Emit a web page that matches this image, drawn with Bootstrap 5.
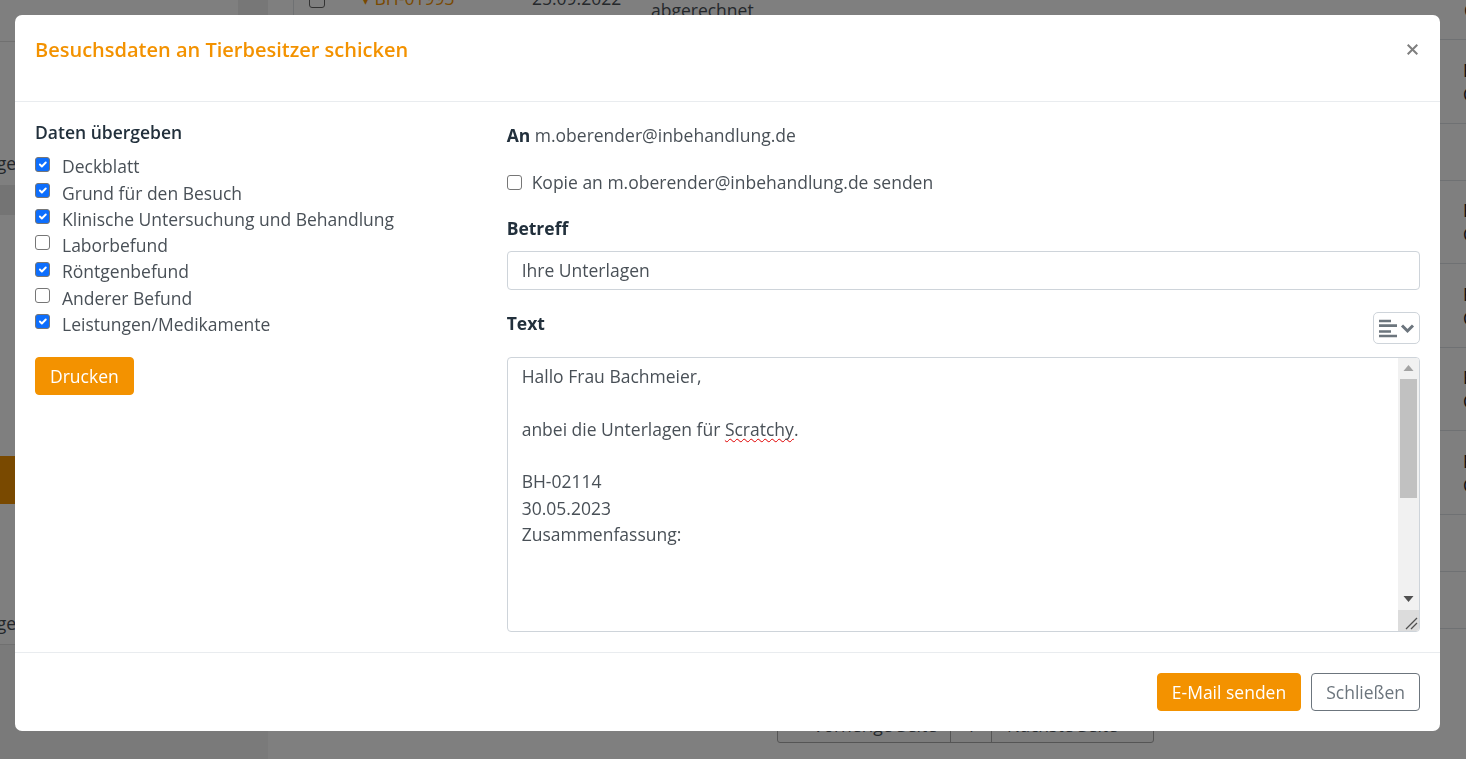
<!doctype html>
<html lang="de">
<head>
<meta charset="utf-8">
<title>Besuchsdaten</title>
<link href="https://cdn.jsdelivr.net/npm/bootstrap@5.3.0/dist/css/bootstrap.min.css" rel="stylesheet">
<style>
html,body{height:100%;overflow:hidden}
body{font-family:"Open Sans",sans-serif;font-size:17.5px;line-height:1.5;color:#495057;background:#fff}
/* page behind the dialog */
.app-bg{height:759px;overflow:hidden}
.side-col{width:268px;background:#f4f4f4;flex:none}
.side-top{height:42px;background:#fff;border-bottom:1px solid #e0e0e0}
.side-top span{display:block;height:100%;margin-left:238px;width:30px;background:#eee}
.side-txt{height:143px;padding:108px 252px 0 0;line-height:26px;background:#fff;white-space:nowrap;overflow:hidden;justify-content:flex-end}
.side-band{height:30px;background:#e9e9e9}
.side-space{height:241px;background:#fff}
.side-active{height:48px;background:#f39200}
.side-low{height:141px;background:#fff;padding:106px 252px 0 0;line-height:26px;white-space:nowrap;overflow:hidden;justify-content:flex-end;border-bottom:1px solid #e0e0e0}
.main-col{flex:1;min-width:0;background:#fff;padding-left:25px}
.tbl-row{border-bottom:1px solid #dee2e6;border-left:1px solid #dee2e6;width:1400px;padding-left:15px;align-items:center}
.tbl-first{height:40px;align-items:flex-end;overflow:hidden}
.cell-check{width:16px;height:16px;border:1px solid #666;border-radius:3px;margin-bottom:31px;margin-right:36px}
.cell-id{width:171px;color:#f39200;line-height:26px;margin-bottom:28px}
.cell-date{width:119px;line-height:26px;margin-bottom:28px}
.cell-state{width:813px;line-height:26px;margin-bottom:16px}
.cell-end{line-height:26px;margin-bottom:16px;color:#212529}
.cell-far{margin-left:1154px;color:#212529;line-height:24px}
.h57{height:57px}.h84{height:84px}.h83{height:83px}
.pager{margin:74px 0 0 484px;width:377px;height:40px;border:1px solid #aaa;border-radius:3px;background:#f8f8f8}
.pager span{text-align:center;line-height:38px;padding-top:2px;border-right:1px solid #aaa}
.pager .pfirst{width:173px;padding-left:22px}
.pager .pnum{width:41px}
.pager .plast{flex:1;border-right:0;padding-right:20px}

.modal-backdrop{opacity:.5}
.dlg{max-width:1425px;margin:15px 0 0 15px;width:1425px}
.dlg .modal-content{border:0;border-radius:7px;height:716px}
.dlg .modal-header{height:87px;padding:20px;align-items:flex-start;border-bottom:1px solid #e9ecef}
.dlg .modal-title{color:#f39200;font-size:20px;font-weight:600;line-height:30px}
.x-btn{border:0;background:none;padding:0;line-height:0;margin:9px 2px 0 0}
.dlg .modal-body{padding:20px;height:550px;flex:none}
.dlg .modal-footer{padding:20px;border-top:1px solid #e9ecef;height:79px;gap:10px}
.dlg .modal-footer>*{margin:0}
.wide-row{--bs-gutter-x:30px}
.sec-title{color:#22303c;font-weight:700;font-size:17.5px;line-height:26px;margin:0 0 10px}
.left-title{font-weight:600;margin-bottom:8.3px;margin-top:-3px}
.chk{min-height:26.25px;margin:0;padding-left:27px;line-height:26.25px}
.chk .form-check-input{width:15px;height:15px;margin-top:3.4px;margin-left:-27px;border-color:#767676;border-radius:3px}
.chk .form-check-label{color:#495057}
.chk-copy{padding-left:25px;margin-bottom:20px}
.chk-copy .form-check-input{margin-left:-25px;margin-top:6px}
.to-line{line-height:26px;margin:0 0 21px}
.to-line b{color:#22303c;font-weight:700}
.btn-orange{--bs-btn-bg:#f39200;--bs-btn-border-color:#f39200;--bs-btn-color:#fff;--bs-btn-hover-bg:#f39200;--bs-btn-hover-border-color:#f39200;--bs-btn-hover-color:#fff;font-size:17.5px;line-height:26px;padding:5px 14px;border-radius:4px}
.btn-line{--bs-btn-bg:#fff;--bs-btn-border-color:#6c757d;--bs-btn-color:#6c757d;--bs-btn-hover-bg:#fff;--bs-btn-hover-color:#6c757d;--bs-btn-hover-border-color:#6c757d;font-size:17.5px;line-height:26px;padding:5px 14px;border-radius:4px}
.print-btn{margin-top:20px}
.field{height:39px;font-size:17.5px;line-height:26px;padding:4px 14px 6px;border-color:#ced4da;border-radius:4px;color:#495057;margin-bottom:19px}
.txt-head{height:41px}
.txt-head .sec-title{margin:1px 0 0}
.fmt-btn{width:47px;height:32px;padding:0;margin-top:3px;border:1px solid #ced4da;border-radius:5px;background:#fff;--bs-btn-hover-bg:#fff;--bs-btn-hover-border-color:#ced4da}
.fmt-btn svg{display:block;margin:auto}
.mail-box{height:275px;margin-top:7px;border:1px solid #ced4da;border-radius:4px;overflow:hidden}
.mail-text{padding:5px 14px;white-space:pre-line;line-height:26.25px;color:#495057;min-width:0}
.fake-bar{width:21px;background:#f1f1f1}
.bar-btn{height:21px}
.bar-thumb{height:119px;margin:0 2px;background:#c1c1c1}
.bar-corner{height:21px;background:#dcdcdc}
.fake-bar svg{display:block}
.typo{text-decoration:underline wavy #e00000 1px;text-underline-offset:2px;text-decoration-skip-ink:none}
</style>
</head>
<body>
<div class="app-bg d-flex">
  <aside class="side-col">
    <div class="side-top"><span></span></div>
    <div class="side-txt d-flex"><span>Anfrage</span></div>
    <div class="side-band"></div>
    <div class="side-space"></div>
    <div class="side-active"></div>
    <div class="side-low d-flex"><span>Auszuge</span></div>
  </aside>
  <main class="main-col">
    <div class="d-flex tbl-row tbl-first"><span class="cell-check"></span><span class="cell-id">▾ BH-01993</span><span class="cell-date">25.09.2022</span><span class="cell-state">abgerechnet</span><span class="cell-end">C</span></div>
    <div class="d-flex tbl-row h84"><span class="cell-far">B<br>C</span></div>
    <div class="d-flex tbl-row h57"></div>
    <div class="d-flex tbl-row h83"><span class="cell-far">B<br>C</span></div>
    <div class="d-flex tbl-row h84"><span class="cell-far">B<br>C</span></div>
    <div class="d-flex tbl-row h83"><span class="cell-far">B<br>C</span></div>
    <div class="d-flex tbl-row h84"><span class="cell-far">B<br>C</span></div>
    <div class="d-flex tbl-row h57"></div>
    <div class="d-flex tbl-row h57"></div>
    <div class="pager d-flex"><span class="pfirst">Vorherige Seite</span><span class="pnum">1</span><span class="plast">Nächste Seite</span></div>
  </main>
</div>

<div class="modal-backdrop show"></div>
<div class="modal d-block" tabindex="-1" style="overflow:hidden">
  <div class="modal-dialog dlg">
    <div class="modal-content">
      <div class="modal-header">
        <h5 class="modal-title">Besuchsdaten an Tierbesitzer schicken</h5>
        <button type="button" class="x-btn ms-auto" aria-label="Schließen">
          <svg width="11" height="11" viewBox="0 0 11 11" fill="none" stroke="#7f7f7f" stroke-width="2"><path d="M.7.7l9.6 9.6M10.3.7L.7 10.3"/></svg>
        </button>
      </div>
      <div class="modal-body">
        <div class="row wide-row">
          <div class="col-4">
            <p class="sec-title left-title">Daten übergeben</p>
            <div class="form-check chk"><input class="form-check-input" type="checkbox" id="c1" checked><label class="form-check-label" for="c1">Deckblatt</label></div>
            <div class="form-check chk"><input class="form-check-input" type="checkbox" id="c2" checked><label class="form-check-label" for="c2">Grund für den Besuch</label></div>
            <div class="form-check chk"><input class="form-check-input" type="checkbox" id="c3" checked><label class="form-check-label" for="c3">Klinische Untersuchung und Behandlung</label></div>
            <div class="form-check chk"><input class="form-check-input" type="checkbox" id="c4"><label class="form-check-label" for="c4">Laborbefund</label></div>
            <div class="form-check chk"><input class="form-check-input" type="checkbox" id="c5" checked><label class="form-check-label" for="c5">Röntgenbefund</label></div>
            <div class="form-check chk"><input class="form-check-input" type="checkbox" id="c6"><label class="form-check-label" for="c6">Anderer Befund</label></div>
            <div class="form-check chk"><input class="form-check-input" type="checkbox" id="c7" checked><label class="form-check-label" for="c7">Leistungen/Medikamente</label></div>
            <button type="button" class="btn btn-orange print-btn">Drucken</button>
          </div>
          <div class="col-8">
            <p class="to-line"><b>An</b> m.oberender@inbehandlung.de</p>
            <div class="form-check chk chk-copy"><input class="form-check-input" type="checkbox" id="c8"><label class="form-check-label" for="c8">Kopie an m.oberender@inbehandlung.de senden</label></div>
            <p class="sec-title">Betreff</p>
            <input type="text" class="form-control field" value="Ihre Unterlagen">
            <div class="d-flex justify-content-between txt-head">
              <p class="sec-title">Text</p>
              <button type="button" class="btn fmt-btn" aria-label="Vorlage">
                <svg width="37" height="20" viewBox="0 0 37 20" fill="none" stroke="#6c757d"><path d="M1 3h12M1 7.7h18M1 13.5h12M1 18h18" stroke-width="2.7"/><path d="M24 7.5l5.5 5.5 5.5-5.5" stroke-width="3"/></svg>
              </button>
            </div>
            <div class="mail-box d-flex">
              <div class="mail-text flex-grow-1">Hallo Frau Bachmeier,

anbei die Unterlagen für <span class="typo">Scratchy</span>.

BH-02114
30.05.2023
Zusammenfassung:</div>
              <div class="fake-bar d-flex flex-column flex-shrink-0" aria-hidden="true">
                <div class="bar-btn"><svg width="21" height="21"><path d="M10.5 7l5 6h-10z" fill="#a3a3a3"/></svg></div>
                <div class="bar-thumb"></div>
                <div class="flex-grow-1"></div>
                <div class="bar-btn"><svg width="21" height="21"><path d="M5.5 7h10l-5 6z" fill="#505050"/></svg></div>
                <div class="bar-corner"><svg width="21" height="21" fill="none" stroke="#505050" stroke-width="1.3"><path d="M8 19L19 8M13 19l6-6"/></svg></div>
              </div>
            </div>
          </div>
        </div>
      </div>
      <div class="modal-footer">
        <button type="button" class="btn btn-orange">E-Mail senden</button>
        <button type="button" class="btn btn-line">Schließen</button>
      </div>
    </div>
  </div>
</div>
<script src="https://cdn.jsdelivr.net/npm/bootstrap@5.3.0/dist/js/bootstrap.bundle.min.js"></script>
</body>
</html>
